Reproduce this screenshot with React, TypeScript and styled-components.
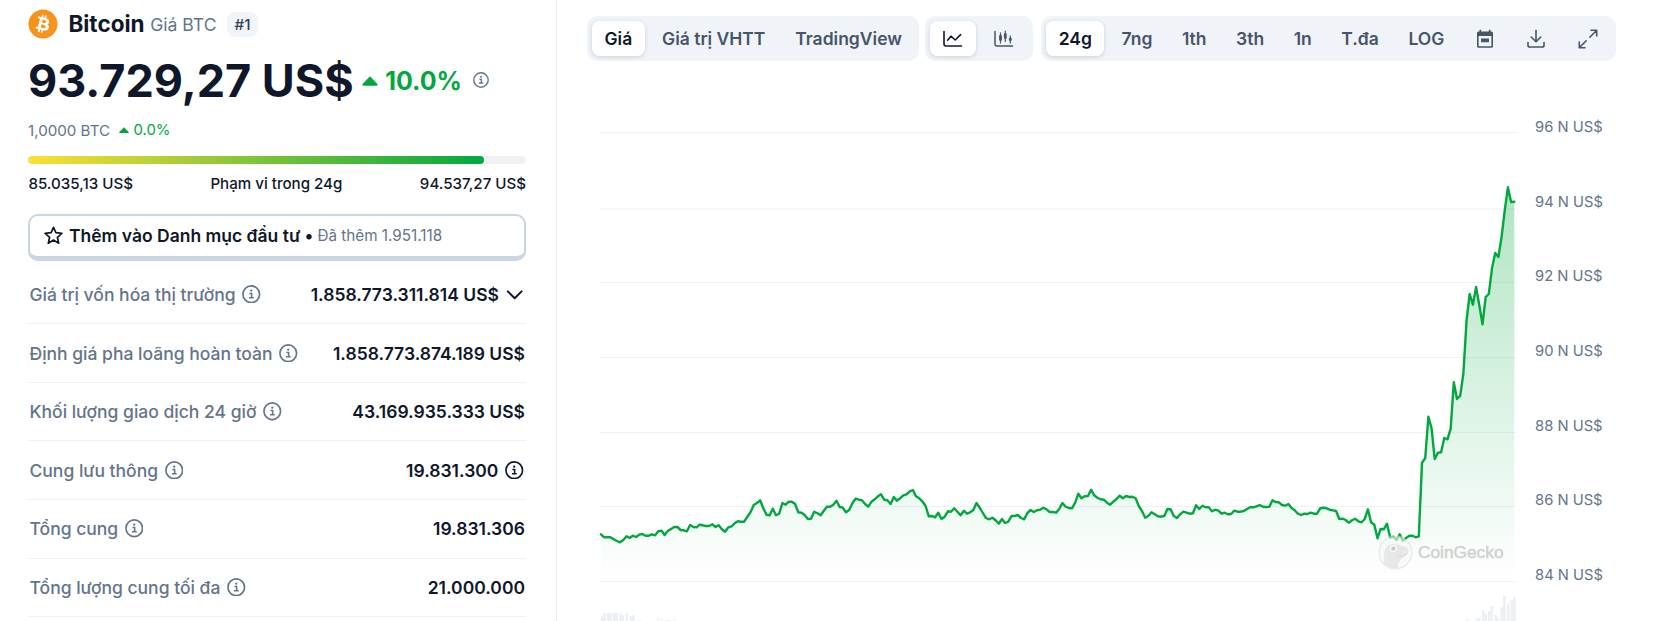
import React from "react";
import styled, { createGlobalStyle, css } from "styled-components";
import { FaBitcoin } from "react-icons/fa";

const GlobalStyle = createGlobalStyle`
  * { box-sizing: border-box; }
  body {
    margin: 0;
    background: #fff;
    color: #0f172a;
    font-family: Inter, "Liberation Sans", sans-serif;
    overflow: hidden;
  }
`;

const Page = styled.div`
  display: flex;
  width: 1657px;
  height: 621px;
  overflow: hidden;
`;

const Sidebar = styled.aside`
  flex: none;
  width: 557px;
  padding: 9px 30px 0 28px;
  border-right: 1px solid #eff2f5;
`;

const NameRow = styled.div`
  display: flex;
  align-items: center;
  height: 30px;
`;

const CoinLogo = styled.span`
  display: flex;
  margin-right: 10.4px;
  svg { display: block; }
`;

const CoinName = styled.span`
  font-size: 22.5px;
  font-weight: 700;
  line-height: 30px;
`;

const CoinSymbol = styled.span`
  margin-left: 5.6px;
  font-size: 17.6px;
  line-height: 31px;
  color: #64748b;
`;

const Rank = styled.span`
  display: flex;
  align-items: center;
  height: 25px;
  margin-left: 10.5px;
  padding: 0 7.5px;
  border-radius: 7.5px;
  background: #f1f5f9;
  color: #334155;
  font-size: 15.2px;
  font-weight: 450;
`;

const PriceRow = styled.div`
  display: flex;
  align-items: center;
  height: 50px;
  margin-top: 17px;
`;

const Price = styled.span`
  font-size: 45px;
  font-weight: 700;
  line-height: 50px;
`;

const Change = styled.span<{ $large?: boolean }>`
  display: flex;
  align-items: center;
  color: #00a83e;
  gap: ${(p) => (p.$large ? "7.5px" : "4.5px")};
  margin-left: ${(p) => (p.$large ? "8px" : "9px")};
  font-size: ${(p) => (p.$large ? "25px" : "14.9px")};
  font-weight: ${(p) => (p.$large ? 650 : 400)};
`;

const PriceInfo = styled.span`
  display: flex;
  margin: -2px 0 0 11px;
  color: #64748b;
`;

const BtcRow = styled.div`
  display: flex;
  align-items: center;
  height: 20px;
  margin-top: 14px;
  font-size: 15.15px;
  color: #64748b;
`;

const RangeTrack = styled.div`
  height: 8px;
  margin-top: 16px;
  border-radius: 4px;
  background: #eff2f5;
`;

const RangeFill = styled.div`
  width: 91.5%;
  height: 100%;
  border-radius: 4px;
  background: linear-gradient(90deg, #ffdf33, #00a83e);
`;

const RangeLabels = styled.div`
  display: flex;
  justify-content: space-between;
  height: 20px;
  margin-top: 10px;
  padding-left: 0.4px;
  font-size: 15.12px;
  font-weight: 500;
  line-height: 20px;
`;

const WatchButton = styled.button`
  display: flex;
  align-items: center;
  width: 100%;
  height: 47px;
  margin: 20px 0 0;
  padding: 0 14px 1.5px;
  border: 2px solid #cbd5e1;
  border-bottom-width: 5px;
  border-radius: 10px;
  background: #fff;
  color: #0f172a;
  font: 600 17.5px Inter, "Liberation Sans", sans-serif;
  svg { margin-right: 6px; }
`;

const Added = styled.span`
  margin-left: 4px;
  font-size: 15.25px;
  font-weight: 400;
  color: #64748b;
`;

const Stats = styled.dl`
  margin: 4.7px 0 0;
`;

const StatRow = styled.div`
  display: flex;
  align-items: center;
  justify-content: space-between;
  height: 58.6px;
  padding: 0 1px 0 1.5px;
  border-bottom: 1px solid #eff2f5;
  font-size: 17.5px;
`;

const StatLabel = styled.dt`
  display: flex;
  align-items: center;
  gap: 6.8px;
  font-weight: 500;
  color: #64748b;
  svg { margin-top: -0.5px; }
`;

const StatValue = styled.dd`
  display: flex;
  align-items: center;
  gap: 6.8px;
  margin: 0;
  font-weight: 600;
  svg { margin: -0.5px 1.3px 0 0; }
`;

const Main = styled.main`
  flex: 1;
  min-width: 0;
  padding: 16px 0 0 30px;
`;

const Toolbar = styled.div`
  display: flex;
`;

const Group = styled.div<{ $gap?: number; $wide?: boolean }>`
  display: flex;
  align-items: center;
  gap: ${(p) => (p.$wide ? 4.85 : 4.55)}px;
  height: 45px;
  padding: 5px;
  margin-right: ${(p) => p.$gap ?? 0}px;
  border-radius: 10px;
  background: #f0f4f9;
`;

const Tab = styled.button<{ $active?: boolean; $icon?: boolean }>`
  display: flex;
  align-items: center;
  justify-content: center;
  height: 35px;
  padding: 0 12.5px;
  border: 0;
  border-radius: 7.5px;
  background: transparent;
  color: #475569;
  font: 600 17.5px Inter, "Liberation Sans", sans-serif;
  white-space: nowrap;
  ${(p) => p.$icon && css`width: 46.9px; padding: 0;`}
  ${(p) =>
    p.$active &&
    css`
      background: #fff;
      color: #0f172a;
      box-shadow: 0 1px 4px rgba(15, 23, 42, 0.16);
    `}
`;

const ChartArea = styled.div`
  position: relative;
  height: 560px;
  svg { display: block; }
`;

const Watermark = styled.div`
  position: absolute;
  left: 791px;
  top: 474px;
  display: flex;
  align-items: center;
  gap: 5px;
  opacity: 0.6;
  color: #b4b4b4;
  font: 400 17.3px "Liberation Sans", Arial, sans-serif;
  -webkit-text-stroke: 0.5px #b4b4b4;
`;

const AxisText = styled.text`
  fill: #64748b;
  font-size: 14.75px;
`;

const InfoIcon = ({ size = 18.5 }: { size?: number }) => (
  <svg width={size} height={size} viewBox="0 0 18 18" fill="none" stroke="currentColor">
    <circle cx="9" cy="9" r="8.1" strokeWidth="1.6" />
    <path d="M7.2 8.3H9.4V12.3M6.8 12.4H11.4" strokeWidth="1.5" />
    <circle cx="9" cy="5.5" r="1.1" fill="currentColor" stroke="none" />
  </svg>
);

const Caret = ({ width }: { width: number }) => (
  <svg width={width} height={width * 0.62} viewBox="0 0 16 10">
    <path d="M8 0.3 15.5 8.2Q16 9.8 14.8 9.8H1.2Q0 9.8 0.5 8.2Z" fill="currentColor" />
  </svg>
);

const Chevron = () => (
  <svg width="18" height="18" viewBox="0 0 18 18" fill="none" stroke="currentColor" strokeWidth="2" strokeLinecap="round" strokeLinejoin="round">
    <path d="M1.8 6.4 8.7 13.2 15.6 6.4" />
  </svg>
);

const Star = () => (
  <svg width="19" height="19" viewBox="0 0 19 19" fill="none" stroke="currentColor" strokeWidth="1.7" strokeLinejoin="round">
    <path d="M9.5 1.3 11.9 6.7 17.9 7.3 13.4 11.3 14.7 17.2 9.5 14.1 4.3 17.2 5.6 11.3 1.1 7.3 7.1 6.7Z" />
  </svg>
);

const LineIcon = () => (
  <svg width="22" height="22" viewBox="0 0 22 22" fill="none" stroke="currentColor" strokeWidth="1.6" strokeLinecap="round" strokeLinejoin="round">
    <path d="M2 3.5V16Q2 18 4 18H19.5M5.6 12.2 9 8.2 13.2 12 18.6 6.6" />
  </svg>
);

const CandleIcon = () => (
  <svg width="22" height="22" viewBox="0 0 22 22" fill="none" stroke="currentColor" strokeLinecap="round">
    <path d="M2 3.5V16Q2 18 4 18H19.5" strokeWidth="1.5" />
    <path d="M7.5 4.8V15M12.3 3.2V13.5M17.3 7.8V15" strokeWidth="1.2" />
    <path d="M7.5 7.2V12.4M12.3 5.4V10.6M17.3 10V12.8" strokeWidth="2.8" strokeLinecap="butt" />
  </svg>
);

const CalendarIcon = () => (
  <svg width="22" height="22" viewBox="0 0 22 22">
    <path
      fill="currentColor"
      fillRule="evenodd"
      d="M5.5 1.8H7.2V3.6H14.8V1.8H16.5V3.6H17.5Q19 3.6 19 5.2V18.2Q19 19.8 17.5 19.8H4.5Q3 19.8 3 18.2V5.2Q3 3.6 4.5 3.6H5.5ZM4.6 8V18.2H17.4V8ZM7 10.6H15V14.2H7Z"
    />
  </svg>
);

const DownloadIcon = () => (
  <svg width="22" height="22" viewBox="0 0 22 22" fill="none" stroke="currentColor" strokeWidth="1.6" strokeLinecap="round" strokeLinejoin="round">
    <path d="M11 2.2V13.5M6.2 9 11 13.8 15.8 9M3 14.5V17.2Q3 19 4.8 19H17.2Q19 19 19 17.2V14.5" />
  </svg>
);

const ExpandIcon = () => (
  <svg width="22" height="22" viewBox="0 0 22 22" fill="none" stroke="currentColor" strokeWidth="1.6" strokeLinecap="round" strokeLinejoin="round">
    <path d="M14 2.3H19.7V8M19.5 2.5 12.8 9.2M2.3 14V19.7H8M2.5 19.5 9.2 12.8" />
  </svg>
);

const Gecko = () => (
  <svg width="35" height="35" viewBox="0 0 35 35">
    <circle cx="17.5" cy="17.5" r="16.4" fill="#f7f7f7" stroke="#dedede" strokeWidth="1.4" />
    <path d="M6 29C6.5 23 5.6 19 7 14.5C8.5 10.5 12 9 16.5 9.2C21 9 24 11 28.5 12.6C31.5 14.2 31 18 28.5 20.2C26.5 22 24.5 22.4 23.4 23.5C20.8 26 20 29.5 19.8 33.3C14 34.3 9.5 32.5 6 29Z" fill="#dadada" />
    <path d="M19 21.4C22.5 22 25.8 21.4 29 18.8" fill="none" stroke="#c2c2c2" strokeWidth="0.9" />
    <circle cx="15.3" cy="13.6" r="3.4" fill="#fff" />
    <circle cx="15.3" cy="13.6" r="2.2" fill="#a8a8a8" />
    <circle cx="27" cy="17" r="0.8" fill="#fff" />
  </svg>
);

/* Price samples at five-minute steps, as thirds of a pixel below y = 399. */
const samples = [
  223, 232, 232, 232, 238, 243, 247, 240, 229, 234, 227, 231, 224, 222, 227, 227, 223, 226, 214, 212,
  225, 213, 207, 201, 201, 210, 211, 214, 195, 201, 202, 194, 196, 198, 198, 193, 201, 196, 208, 215,
  202, 199, 190, 184, 185, 185, 170, 156, 135, 129, 121, 145, 164, 166, 146, 166, 161, 129, 134, 125,
  125, 132, 157, 158, 165, 177, 176, 155, 160, 166, 152, 140, 140, 134, 122, 141, 143, 157, 150, 130,
  116, 119, 121, 132, 140, 125, 118, 109, 103, 119, 121, 132, 111, 122, 115, 106, 103, 94, 90, 109,
  115, 124, 138, 169, 168, 172, 158, 177, 170, 154, 155, 145, 155, 166, 152, 161, 157, 150, 129, 143,
  159, 174, 178, 173, 181, 191, 177, 189, 185, 168, 168, 165, 174, 178, 159, 150, 156, 151, 149, 143,
  148, 156, 156, 158, 147, 129, 140, 144, 145, 128, 101, 115, 109, 108, 89, 106, 113, 118, 119, 128,
  134, 125, 117, 107, 115, 108, 111, 110, 115, 138, 153, 173, 168, 157, 163, 169, 170, 168, 147, 148,
  168, 174, 163, 155, 158, 161, 160, 136, 147, 137, 142, 142, 154, 149, 152, 161, 158, 163, 162, 152,
  155, 155, 153, 147, 142, 142, 139, 135, 140, 141, 140, 121, 126, 127, 135, 137, 132, 144, 151, 161,
  165, 161, 162, 158, 161, 161, 145, 143, 145, 149, 151, 153, 177, 176, 180, 188, 181, 176, 184, 187,
  177, 148, 187, 194, 235, 207, 208, 191, 233, 230, 240, 223, 242, 234, 227, 227, 232, 229, 8, -5,
  -130, -95, -3, -22, -23, -66, -62, -95, -233, -183, -193, -260, -420, -498, -466, -519, -464, -407,
  -489, -498, -575, -621, -609, -670, -750, -818, -774, -775,
];

const X0 = 14;
const STEP = 913.3 / (samples.length - 1);
const linePath = samples
  .map((v, i) => `${i ? "L" : "M"}${(X0 + i * STEP).toFixed(1)} ${(399 + v / 3).toFixed(1)}`)
  .join("");
const areaPath = `${linePath}V520.5H${X0}Z`;

const gridLines = [
  { y: 71.5, label: "96 N US$" },
  { y: 148, label: "94 N US$" },
  { y: 221.5, label: "92 N US$" },
  { y: 296.5, label: "90 N US$" },
  { y: 371.5, label: "88 N US$" },
  { y: 445.5, label: "86 N US$" },
  { y: 520.5, label: "84 N US$" },
];

/* Volume columns: x, width, top. */
const volumes: [number, number, number][] = [
  [14, 2, 556], [16, 3, 552], [20, 5, 552], [26, 5, 552], [32.5, 2.5, 552], [35, 2, 554], [38.5, 2.5, 552],
  [42.5, 2.5, 555], [45, 2.5, 554], [49, 5, 559], [70, 2, 557.5], [73.5, 2, 557.5], [78, 5, 559], [86, 3, 559],
  [879, 2, 557.5], [889, 4.5, 557], [895, 2.5, 549], [897.5, 2.5, 552.5], [901, 2.5, 550], [903.5, 2.5, 545],
  [907.5, 2.5, 554], [910, 2, 557], [913.5, 2.5, 546], [916, 2.7, 535], [920, 2.5, 542.5], [923.5, 2.7, 539], [926.2, 2.4, 536],
];

const PriceChart = () => (
  <svg width="1070" height="560" viewBox="0 0 1070 560">
    <defs>
      <linearGradient id="area" gradientUnits="userSpaceOnUse" x1="0" y1="126" x2="0" y2="520">
        <stop offset="0" stopColor="#00a83e" stopOpacity="0.31" />
        <stop offset="1" stopColor="#00a83e" stopOpacity="0" />
      </linearGradient>
    </defs>
    {gridLines.map((g, i) => (
      <g key={g.label}>
        <path d={`M12.5 ${g.y}H928.5`} stroke="#eef1f4" />
        <AxisText x="948" y={71.1 + i * 74.67}>{g.label}</AxisText>
      </g>
    ))}
    <path d={areaPath} fill="url(#area)" />
    {volumes.map(([x, w, y]) => (
      <rect key={x} x={x} y={y} width={w} height={560 - y} fill="#eceff3" />
    ))}
    <path d={linePath} fill="none" stroke="#00a83e" strokeWidth="2.4" strokeLinejoin="round" strokeLinecap="round" />
  </svg>
);

const stats = [
  { label: "Giá trị vốn hóa thị trường", value: "1.858.773.311.814 US$", extra: <Chevron /> },
  { label: "Định giá pha loãng hoàn toàn", value: "1.858.773.874.189 US$" },
  { label: "Khối lượng giao dịch 24 giờ", value: "43.169.935.333 US$" },
  { label: "Cung lưu thông", value: "19.831.300", extra: <InfoIcon /> },
  { label: "Tổng cung", value: "19.831.306" },
  { label: "Tổng lượng cung tối đa", value: "21.000.000" },
];

const ranges = ["24g", "7ng", "1th", "3th", "1n", "T.đa", "LOG"];

export default function App() {
  return (
    <Page>
      <GlobalStyle />
      <Sidebar>
        <NameRow>
          <CoinLogo><FaBitcoin size={30} color="#f7931a" /></CoinLogo>
          <CoinName>Bitcoin</CoinName>
          <CoinSymbol>Giá BTC</CoinSymbol>
          <Rank>#1</Rank>
        </NameRow>
        <PriceRow>
          <Price>93.729,27 US$</Price>
          <Change $large><Caret width={16} />10.0%</Change>
          <PriceInfo><InfoIcon size={16} /></PriceInfo>
        </PriceRow>
        <BtcRow>
          1,0000 BTC
          <Change><Caret width={10} />0.0%</Change>
        </BtcRow>
        <RangeTrack><RangeFill /></RangeTrack>
        <RangeLabels>
          <span>85.035,13 US$</span>
          <span>Phạm vi trong 24g</span>
          <span>94.537,27 US$</span>
        </RangeLabels>
        <WatchButton>
          <Star />
          Thêm vào Danh mục đầu tư •
          <Added>Đã thêm 1.951.118</Added>
        </WatchButton>
        <Stats>
          {stats.map((s) => (
            <StatRow key={s.label}>
              <StatLabel>{s.label}<InfoIcon /></StatLabel>
              <StatValue>{s.value}{s.extra}</StatValue>
            </StatRow>
          ))}
        </Stats>
      </Sidebar>
      <Main>
        <Toolbar>
          <Group $wide $gap={5.2}>
            <Tab $active>Giá</Tab>
            <Tab>Giá trị VHTT</Tab>
            <Tab>TradingView</Tab>
          </Group>
          <Group $gap={8.3}>
            <Tab $icon $active><LineIcon /></Tab>
            <Tab $icon><CandleIcon /></Tab>
          </Group>
          <Group>
            {ranges.map((r, i) => (
              <Tab key={r} $active={i === 0}>{r}</Tab>
            ))}
            <Tab $icon><CalendarIcon /></Tab>
            <Tab $icon><DownloadIcon /></Tab>
            <Tab $icon><ExpandIcon /></Tab>
          </Group>
        </Toolbar>
        <ChartArea>
          <PriceChart />
          <Watermark><Gecko />CoinGecko</Watermark>
        </ChartArea>
      </Main>
    </Page>
  );
}
